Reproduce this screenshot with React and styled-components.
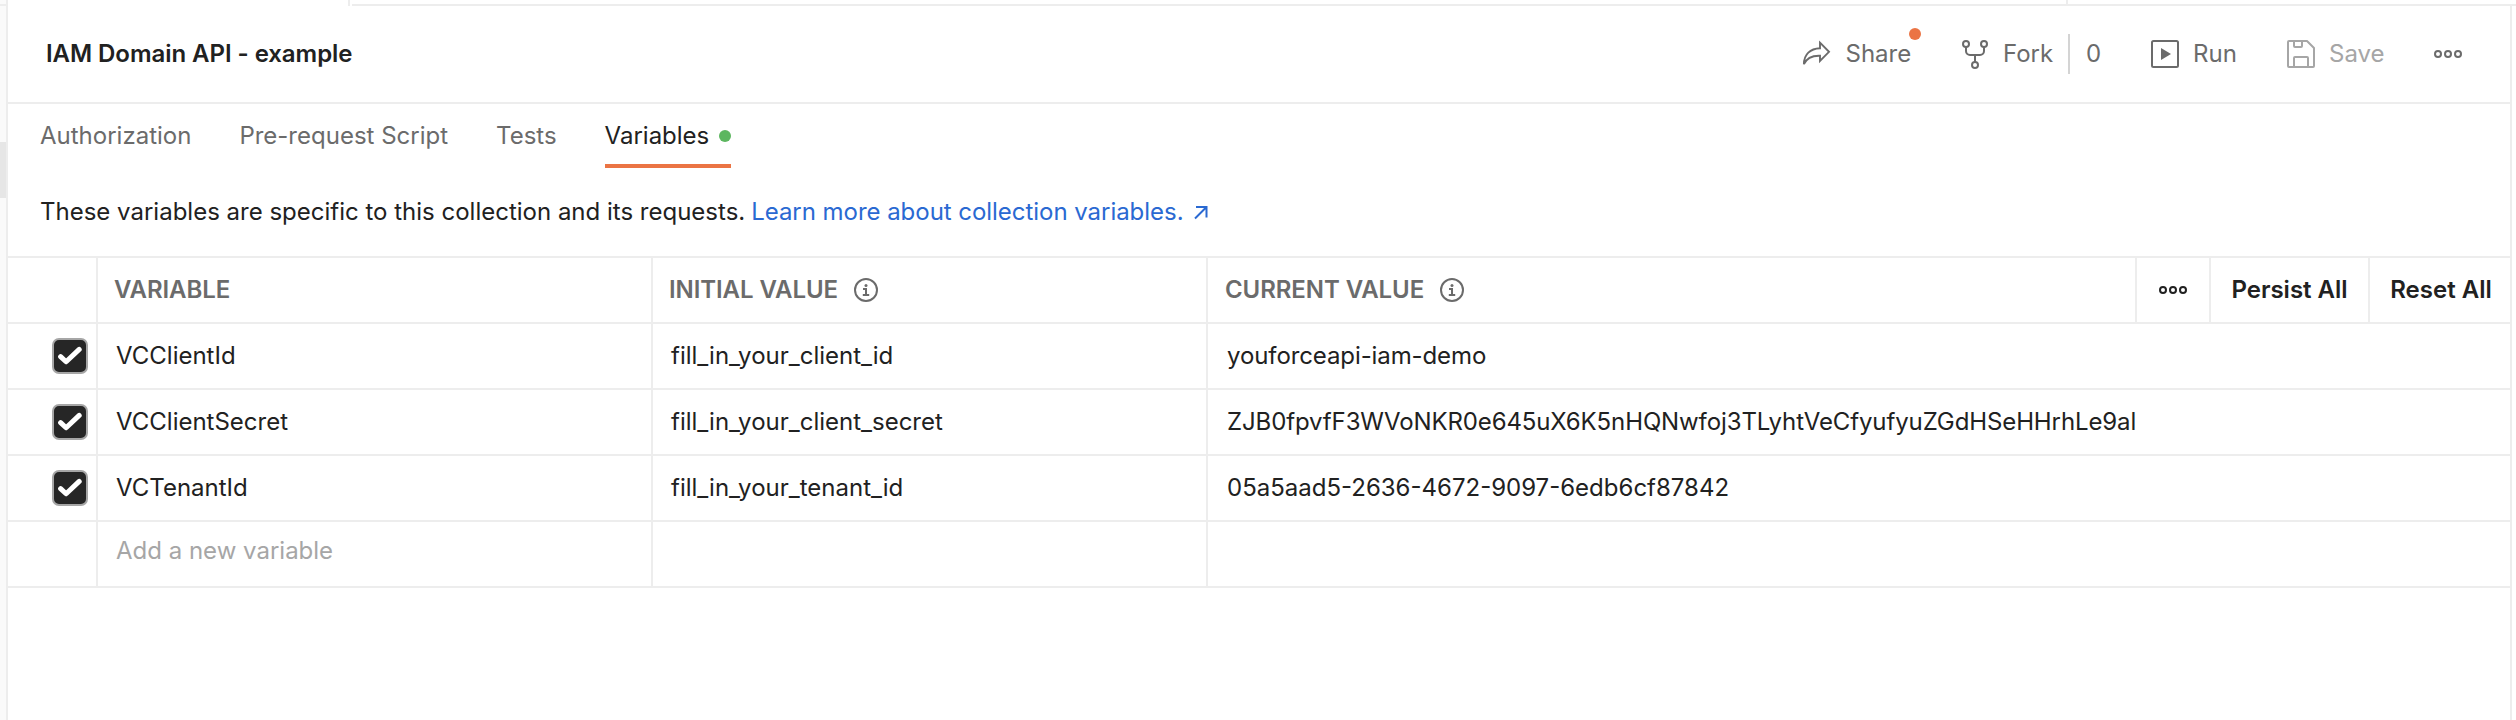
import React from "react";
import styled, { createGlobalStyle } from "styled-components";

const line = "#ededed";

const GlobalStyle = createGlobalStyle`
  * { box-sizing: border-box; }
  body {
    margin: 0;
    background: #fff;
    color: #212121;
    font-family: Inter, "Liberation Sans", sans-serif;
    font-size: 24px;
    line-height: 32px;
  }
`;

const Page = styled.div`
  display: flex;
  width: 2516px;
  height: 720px;
  overflow: hidden;
`;

const Sidebar = styled.div`
  width: 8px;
  flex: none;
  background: #fafafa;
  border-right: 2px solid ${line};
`;

const SidebarTop = styled.div`
  height: 6px;
  border-bottom: 2px solid ${line};
`;

const SidebarSelection = styled.div`
  height: 56px;
  margin-top: 136px;
  background: #e6e6e6;
`;

const Main = styled.div`
  flex: 1;
  min-width: 0;
`;

const TabStrip = styled.div`
  display: flex;
  height: 6px;
`;

const ActiveTab = styled.div`
  width: 342px;
  margin-right: 2px;
  border-right: 2px solid ${line};
`;

const EmptyTab = styled.div`
  width: ${(p) => p.$width || "auto"};
  flex: ${(p) => (p.$width ? "none" : 1)};
  border-bottom: 2px solid ${line};
  border-right: ${(p) => (p.$width ? `2px solid ${line}` : "none")};
`;

const Panel = styled.main`
  width: 2504px;
  height: 714px;
  border-right: 2px solid ${line};
`;

const Header = styled.header`
  display: flex;
  align-items: center;
  height: 98px;
  padding: 0 48px 0 38px;
  border-bottom: 2px solid ${line};
`;

const Title = styled.h1`
  margin: 0;
  flex: 1;
  font-size: 24px;
  font-weight: 600;
  letter-spacing: -0.05px;
`;

const Action = styled.button`
  position: relative;
  display: flex;
  align-items: center;
  height: 40px;
  padding: 0;
  border: 0;
  background: none;
  color: ${(p) => (p.$disabled ? "#a6a6a6" : "#6b6b6b")};
  font: inherit;
  width: ${(p) => p.$width}px;
  svg { flex: none; margin-right: ${(p) => p.$gap ?? 15}px; }
`;

const Badge = styled.span`
  position: absolute;
  top: -6px;
  left: 107px;
  width: 12px;
  height: 12px;
  border-radius: 50%;
  background: #eb7444;
`;

const ForkCount = styled.span`
  width: 83px;
  height: 40px;
  padding-left: 16px;
  border-left: 2px solid #d4d4d4;
  color: #6b6b6b;
  line-height: 40px;
`;

const Tabs = styled.nav`
  display: flex;
  gap: 48px;
  height: 64px;
  padding-left: 32px;
`;

const Tab = styled.a`
  display: flex;
  align-items: center;
  gap: 10px;
  height: 64px;
  color: ${(p) => (p.$active ? "#212121" : "#6b6b6b")};
  border-bottom: 4px solid ${(p) => (p.$active ? "#eb7444" : "transparent")};
  padding-top: 4px;
`;

const StatusDot = styled.span`
  width: 12px;
  height: 12px;
  border-radius: 50%;
  background: #5cb65f;
`;

const Intro = styled.p`
  display: flex;
  align-items: center;
  margin: 0;
  height: 88px;
  padding: 0 0 0 32px;
`;

const Link = styled.a`
  display: flex;
  align-items: center;
  gap: 9px;
  margin-left: 6px;
  color: #2a69d2;
  letter-spacing: -0.04px;
`;

const Table = styled.div`
  border-top: 2px solid ${line};
`;

const Row = styled.div`
  display: grid;
  grid-template-columns: 88px 555px 555px 1fr auto;
  height: 66px;
  border-bottom: 2px solid ${line};
`;

const SelectCell = styled.div`
  display: flex;
  align-items: center;
  padding-left: 44px;
`;

const Cell = styled.div`
  display: flex;
  align-items: center;
  padding-left: 18px;
  border-left: 2px solid ${line};
`;

const CurrentCell = styled(Cell)`
  padding-left: 19px;
  letter-spacing: ${(p) => p.$tracking || "normal"};
`;

const HeadCell = styled(Cell)`
  gap: 16px;
  padding-left: ${(p) => (p.$last ? 17 : 16)}px;
  color: #6b6b6b;
  font-weight: 600;
  letter-spacing: -0.08px;
`;

const Placeholder = styled.span`
  color: #a6a6a6;
  margin-bottom: 6px;
`;

const HeadActions = styled.div`
  display: flex;
`;

const HeadButton = styled.button`
  display: flex;
  align-items: center;
  justify-content: center;
  width: ${(p) => p.$width}px;
  padding: 0 0 0 ${(p) => p.$shift || 0}px;
  border: 0;
  border-left: 2px solid ${line};
  background: none;
  color: #212121;
  font: inherit;
  font-weight: 600;
`;

const Checkbox = styled.span`
  display: flex;
  align-items: center;
  justify-content: center;
  width: 36px;
  height: 36px;
  border: 2px solid #a6a6a6;
  border-radius: 7px;
  background: #262626;
`;

const ShareIcon = () => (
  <svg width="30" height="28" viewBox="0 0 30 28" fill="none" stroke="currentColor" strokeWidth="1.9">
    <path d="M18 2.7 27 11.8 18 20.9V15.7C9.5 15.4 4.6 18 1.9 24.2 2 14.4 8.2 8.6 18 8.3Z" />
  </svg>
);

const ForkIcon = () => (
  <svg width="26" height="30" viewBox="0 0 26 30" fill="none" stroke="currentColor" strokeWidth="2">
    <circle cx="4" cy="5" r="3" />
    <circle cx="22" cy="5" r="3" />
    <circle cx="13" cy="26" r="3" />
    <path d="M4 8V12a4 4 0 0 0 4 4h10a4 4 0 0 0 4-4V8M13 16v7" />
  </svg>
);

const RunIcon = () => (
  <svg width="28" height="28" viewBox="0 0 28 28" fill="none" stroke="currentColor" strokeWidth="2">
    <rect x="1" y="1" width="26" height="26" rx="1.5" />
    <path d="M10 8v12l10-6Z" fill="currentColor" stroke="none" />
  </svg>
);

const SaveIcon = () => (
  <svg width="28" height="28" viewBox="0 0 28 28" fill="none" stroke="currentColor" strokeWidth="2" strokeLinejoin="round">
    <path d="M2 1H20L27 8V26a1 1 0 0 1-1 1H2a1 1 0 0 1-1-1V2a1 1 0 0 1 1-1Z" />
    <path d="M7 1V6a1 1 0 0 0 1 1h6a1 1 0 0 0 1-1V1M7 27V18a1 1 0 0 1 1-1H20a1 1 0 0 1 1 1V27" />
  </svg>
);

const MoreIcon = () => (
  <svg width="28" height="8" viewBox="0 0 28 8" fill="none" stroke="currentColor" strokeWidth="2">
    <circle cx="4" cy="4" r="3" />
    <circle cx="14" cy="4" r="3" />
    <circle cx="24" cy="4" r="3" />
  </svg>
);

const InfoIcon = () => (
  <svg width="24" height="24" viewBox="0 0 24 24" fill="none" stroke="currentColor" strokeWidth="2">
    <circle cx="12" cy="12" r="11" />
    <path d="M9 11h3v6M8.8 17h6.4" />
    <circle cx="12" cy="7.4" r="1.5" fill="currentColor" stroke="none" />
  </svg>
);

const ExternalIcon = () => (
  <svg width="16" height="16" viewBox="0 0 16 16" fill="none" stroke="currentColor" strokeWidth="2">
    <path d="M3 3h10.5v10.5M13.5 3 2 14.5" />
  </svg>
);

const CheckIcon = () => (
  <svg width="24" height="20" viewBox="0 0 24 20" fill="none" stroke="#fff" strokeWidth="5" strokeLinecap="round" strokeLinejoin="round">
    <path d="M2.6 10.6 8.1 15.8 21.2 3.4" />
  </svg>
);

const variables = [
  { name: "VCClientId", initial: "fill_in_your_client_id", current: "youforceapi-iam-demo", tracking: "-0.1px" },
  {
    name: "VCClientSecret",
    initial: "fill_in_your_client_secret",
    current: "ZJB0fpvfF3WVoNKR0e645uX6K5nHQNwfoj3TLyhtVeCfyufyuZGdHSeHHrhLe9al",
    tracking: "-0.11px",
  },
  { name: "VCTenantId", initial: "fill_in_your_tenant_id", current: "05a5aad5-2636-4672-9097-6edb6cf87842" },
];

export default function App() {
  return (
    <Page>
      <GlobalStyle />
      <Sidebar>
        <SidebarTop />
        <SidebarSelection />
      </Sidebar>
      <Main>
        <TabStrip>
          <ActiveTab />
          <EmptyTab $width="1716px" />
          <EmptyTab />
        </TabStrip>
        <Panel>
          <Header>
            <Title>IAM Domain API - example</Title>
            <Action $width={160} $gap={13.5}><ShareIcon />Share<Badge /></Action>
            <Action $width={106}><ForkIcon />Fork</Action>
            <ForkCount>0</ForkCount>
            <Action $width={136} $gap={14}><RunIcon />Run</Action>
            <Action $width={147} $gap={14} $disabled><SaveIcon />Save</Action>
            <Action $width={28} $gap={0}><MoreIcon /></Action>
          </Header>
          <Tabs>
            <Tab>Authorization</Tab>
            <Tab>Pre-request Script</Tab>
            <Tab>Tests</Tab>
            <Tab $active>Variables<StatusDot /></Tab>
          </Tabs>
          <Intro>
            These variables are specific to this collection and its requests.
            <Link>Learn more about collection variables.<ExternalIcon /></Link>
          </Intro>
          <Table>
            <Row>
              <SelectCell />
              <HeadCell>VARIABLE</HeadCell>
              <HeadCell>INITIAL VALUE<InfoIcon /></HeadCell>
              <HeadCell $last>CURRENT VALUE<InfoIcon /></HeadCell>
              <HeadActions>
                <HeadButton $width={74}><MoreIcon /></HeadButton>
                <HeadButton $width={159}>Persist All</HeadButton>
                <HeadButton $width={142} $shift={2}>Reset All</HeadButton>
              </HeadActions>
            </Row>
            {variables.map(({ name, initial, current, tracking }) => (
              <Row key={name}>
                <SelectCell><Checkbox><CheckIcon /></Checkbox></SelectCell>
                <Cell>{name}</Cell>
                <Cell>{initial}</Cell>
                <CurrentCell $tracking={tracking}>{current}</CurrentCell>
              </Row>
            ))}
            <Row>
              <SelectCell />
              <Cell><Placeholder>Add a new variable</Placeholder></Cell>
              <Cell />
              <Cell />
            </Row>
          </Table>
        </Panel>
      </Main>
    </Page>
  );
}
